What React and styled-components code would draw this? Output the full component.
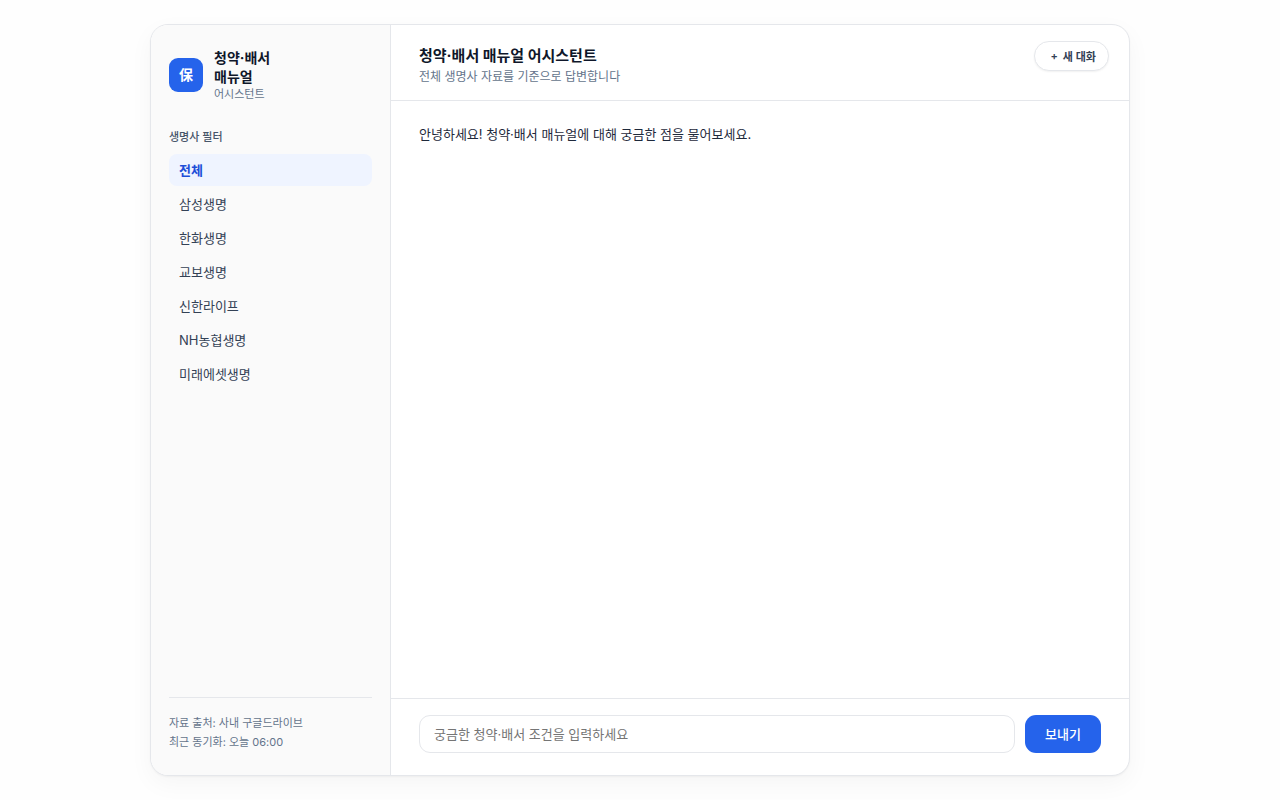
import React, { useState } from 'react';
import styled, { createGlobalStyle } from 'styled-components';

const insurers = ['전체', '삼성생명', '한화생명', '교보생명', '신한라이프', 'NH농협생명', '미래에셋생명'];

const GlobalStyle = createGlobalStyle`
  * {
    box-sizing: border-box;
  }

  body {
    margin: 0;
    background: #fefefe;
    color: #1e293b;
    font-family: Inter, "Noto Sans CJK KR", sans-serif;
    font-size: 13px;
  }

  button,
  input {
    font-family: inherit;
  }
`;

const Page = styled.div`
  display: flex;
  justify-content: center;
  min-height: 100vh;
  padding: 24px;
`;

const Shell = styled.div`
  display: flex;
  width: 100%;
  max-width: 980px;
  overflow: hidden;
  background: #ffffff;
  border: 1px solid #e5e7eb;
  border-radius: 18px;
  box-shadow: 0 1px 2px rgba(0, 0, 0, 0.04), 0 8px 24px rgba(0, 0, 0, 0.04);
`;

const Sidebar = styled.aside`
  display: flex;
  flex-direction: column;
  flex: 0 0 240px;
  padding: 23px 18px;
  background: #fafafa;
  border-right: 1px solid #e5e7eb;
`;

const Brand = styled.div`
  display: flex;
  align-items: center;
  gap: 11px;
  margin-bottom: 26px;
`;

const BrandMark = styled.div`
  display: flex;
  align-items: center;
  justify-content: center;
  width: 34px;
  height: 34px;
  padding-bottom: 2px;
  border-radius: 9px;
  background: #2563eb;
  color: #ffffff;
  font-size: 14px;
  font-weight: 700;
`;

const BrandName = styled.div`
  color: #0f172a;
  font-size: 14px;
  font-weight: 700;
  line-height: 19px;
`;

const BrandSub = styled.div`
  color: #64748b;
  font-size: 11px;
  line-height: 16px;
`;

const FilterTitle = styled.h2`
  margin: 0 0 8px;
  color: #475569;
  font-size: 11px;
  font-weight: 500;
  line-height: 18px;
`;

const FilterList = styled.nav`
  display: flex;
  flex-direction: column;
  gap: 2px;
`;

const FilterButton = styled.button`
  height: 32px;
  padding: 0 10px 2px;
  border: 0;
  border-radius: 8px;
  background: ${({ $active }) => ($active ? '#eff4ff' : 'transparent')};
  color: ${({ $active }) => ($active ? '#1d4ed8' : '#334155')};
  font-size: 13px;
  font-weight: ${({ $active }) => ($active ? 600 : 400)};
  text-align: left;
  cursor: pointer;
`;

const SourceInfo = styled.div`
  margin-top: auto;
  padding-top: 16px;
  border-top: 1px solid #e5e7eb;
  color: #64748b;
  font-size: 11px;
  line-height: 19px;
`;

const Main = styled.main`
  display: flex;
  flex: 1;
  flex-direction: column;
  min-width: 0;
`;

const Header = styled.header`
  display: flex;
  align-items: flex-start;
  justify-content: space-between;
  padding: 16px 20px 14px 28px;
  border-bottom: 1px solid #e5e7eb;
`;

const Title = styled.h1`
  margin: 0;
  padding-top: 4px;
  color: #0f172a;
  font-size: 15px;
  font-weight: 700;
  line-height: 22px;
`;

const Subtitle = styled.p`
  margin: 0;
  color: #64748b;
  font-size: 12px;
  line-height: 19px;
`;

const NewChatButton = styled.button`
  display: flex;
  align-items: center;
  gap: 5px;
  height: 30px;
  padding: 0 12px 1px 15px;
  border: 1px solid #e5e7eb;
  border-radius: 15px;
  background: #ffffff;
  box-shadow: 0 1px 2px rgba(0, 0, 0, 0.06);
  color: #334155;
  font-size: 11px;
  font-weight: 600;
  cursor: pointer;
`;

const Messages = styled.section`
  flex: 1;
  padding: 22px 28px;
`;

const Message = styled.p`
  margin: 0;
  color: #1e293b;
  font-size: 13px;
  line-height: 22px;
`;

const Composer = styled.form`
  display: flex;
  gap: 10px;
  padding: 16px 28px 22px;
  border-top: 1px solid #e5e7eb;
`;

const QuestionInput = styled.input`
  flex: 1;
  min-width: 0;
  height: 38px;
  padding: 0 14px;
  border: 1px solid #e5e7eb;
  border-radius: 11px;
  background: #ffffff;
  color: #1e293b;
  font-size: 13px;

  &::placeholder {
    color: #757575;
  }
`;

const SendButton = styled.button`
  padding: 0 20px 2px;
  border: 0;
  border-radius: 11px;
  background: #2563eb;
  color: #ffffff;
  font-size: 13px;
  font-weight: 500;
  cursor: pointer;
`;

function App() {
  const [selected, setSelected] = useState('전체');
  const [question, setQuestion] = useState('');

  const handleSubmit = (e) => {
    e.preventDefault();
    setQuestion('');
  };

  return (
    <>
      <GlobalStyle />
      <Page>
        <Shell>
          <Sidebar>
            <Brand>
              <BrandMark>保</BrandMark>
              <div>
                <BrandName>
                  청약·배서
                  <br />
                  매뉴얼
                </BrandName>
                <BrandSub>어시스턴트</BrandSub>
              </div>
            </Brand>
            <FilterTitle>생명사 필터</FilterTitle>
            <FilterList aria-label="생명사 필터">
              {insurers.map((name) => (
                <FilterButton
                  key={name}
                  type="button"
                  $active={name === selected}
                  aria-pressed={name === selected}
                  onClick={() => setSelected(name)}
                >
                  {name}
                </FilterButton>
              ))}
            </FilterList>
            <SourceInfo>
              <div>자료 출처: 사내 구글드라이브</div>
              <div>최근 동기화: 오늘 06:00</div>
            </SourceInfo>
          </Sidebar>
          <Main>
            <Header>
              <div>
                <Title>청약·배서 매뉴얼 어시스턴트</Title>
                <Subtitle>전체 생명사 자료를 기준으로 답변합니다</Subtitle>
              </div>
              <NewChatButton type="button" onClick={() => setQuestion('')}>
                <span>+</span>
                <span>새 대화</span>
              </NewChatButton>
            </Header>
            <Messages>
              <Message>안녕하세요! 청약·배서 매뉴얼에 대해 궁금한 점을 물어보세요.</Message>
            </Messages>
            <Composer onSubmit={handleSubmit}>
              <QuestionInput
                type="text"
                aria-label="질문"
                placeholder="궁금한 청약·배서 조건을 입력하세요"
                value={question}
                onChange={(e) => setQuestion(e.target.value)}
              />
              <SendButton type="submit">보내기</SendButton>
            </Composer>
          </Main>
        </Shell>
      </Page>
    </>
  );
}

export default App;
